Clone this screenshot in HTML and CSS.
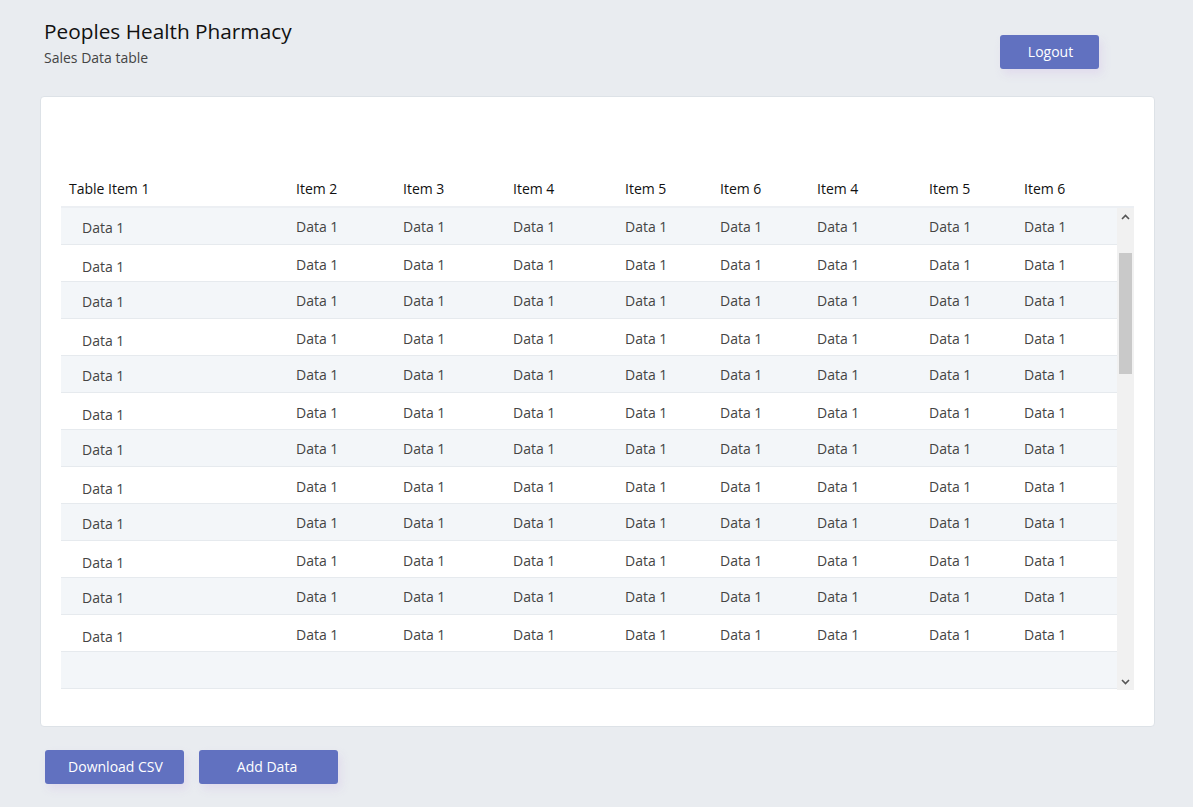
FILE: index.html
```html
<!DOCTYPE html>
<html lang="en">
<head>
<meta charset="utf-8">
<title>Peoples Health Pharmacy</title>
<link rel="stylesheet" href="styles.css">
</head>
<body>
<header class="top">
  <div class="brand">
    <h1 class="title">Peoples Health Pharmacy</h1>
    <p class="subtitle">Sales Data table</p>
  </div>
  <button class="btn btn-logout">Logout</button>
</header>

<main class="card">
  <div class="table">
    <div class="thead">
      <div class="c c1">Table Item 1</div>
      <div class="c c2">Item 2</div>
      <div class="c c3">Item 3</div>
      <div class="c c4">Item 4</div>
      <div class="c c5">Item 5</div>
      <div class="c c6">Item 6</div>
      <div class="c c7">Item 4</div>
      <div class="c c8">Item 5</div>
      <div class="c c9">Item 6</div>
    </div>
    <div class="tbody-wrap">
      <div class="tbody" id="rows"></div>
      <div class="scrollbar">
        <div class="sb-btn">
          <svg width="9" height="6" viewBox="0 0 9 6"><path d="M1 5 L4.5 1.5 L8 5" fill="none" stroke="#555" stroke-width="1.6"/></svg>
        </div>
        <div class="sb-gap"></div>
        <div class="sb-thumb"></div>
        <div class="sb-rest"></div>
        <div class="sb-btn">
          <svg width="9" height="6" viewBox="0 0 9 6"><path d="M1 1 L4.5 4.5 L8 1" fill="none" stroke="#555" stroke-width="1.6"/></svg>
        </div>
      </div>
    </div>
  </div>
</main>

<footer class="actions">
  <button class="btn btn-dl">Download CSV</button>
  <button class="btn btn-add">Add Data</button>
</footer>

<script>
  var rows = document.getElementById('rows');
  var html = '';
  for (var r = 0; r < 13; r++) {
    html += '<div class="tr">';
    for (var c = 1; c <= 9; c++) {
      html += '<div class="c c' + c + '">' + (r < 12 ? 'Data 1' : '') + '</div>';
    }
    html += '</div>';
  }
  rows.innerHTML = html;
</script>
</body>
</html>
```

FILE: styles.css
```css
* { box-sizing: border-box; }

html, body { margin: 0; padding: 0; }

body {
  background: #e9ecf0;
  font-family: "Open Sans", "Noto Sans", sans-serif;
  color: #222;
  width: 1193px;
  height: 807px;
  overflow: hidden;
}

.top {
  display: flex;
  justify-content: space-between;
  align-items: flex-start;
  padding: 16px 94px 0 44px;
  height: 96px;
}

.title {
  margin: 0;
  font-size: 20.8px;
  font-weight: 400;
  color: #111;
  line-height: 30px;
}

.subtitle {
  margin: 3px 0 0 0;
  font-size: 14px;
  color: #444;
  line-height: 18px;
}

.btn {
  font-family: inherit;
  font-size: 14px;
  color: #fff;
  background: #6171c0;
  border: none;
  border-radius: 3px;
  height: 34px;
  cursor: pointer;
  box-shadow: 3px 5px 9px rgba(214, 200, 232, 0.45);
}

.btn-logout {
  width: 99px;
  margin-top: 19px;
  padding-bottom: 2px;
  padding-right: 4px;
}

.card {
  margin: 0 38px 0 40px;
  height: 631px;
  background: #fff;
  border: 1px solid #dde2e7;
  border-radius: 4px;
  padding: 73px 20px 0 20px;
}

.table {
  width: 1073px;
}

.thead {
  display: flex;
  height: 38px;
  align-items: center;
  border-bottom: 2px solid #eceff3;
  font-size: 14px;
  color: #111;
}

.c {
  padding-left: 8px;
  white-space: nowrap;
}
.c1 { width: 227px; }
.c2 { width: 107px; }
.c3 { width: 110px; }
.c4 { width: 112px; }
.c5 { width: 95px; }
.c6 { width: 97px; }
.c7 { width: 112px; }
.c8 { width: 95px; }
.c9 { width: 101px; }

.tbody-wrap {
  display: flex;
  height: 482px;
}

.tbody {
  width: 1056px;
}

.tr {
  display: flex;
  align-items: center;
  height: 37px;
  border-bottom: 1px solid #e6eaee;
  font-size: 14px;
  color: #444;
}
.tr:nth-child(odd) { background: #f3f6f9; }
.tr:nth-child(even) { padding-top: 3px; }
.tr .c1 { padding-left: 21px; padding-top: 3px; }

.scrollbar {
  width: 17px;
  background: #f1f1f1;
  display: flex;
  flex-direction: column;
}
.sb-btn {
  height: 17px;
  display: flex;
  align-items: center;
  justify-content: center;
}
.sb-gap { height: 28px; }
.sb-thumb {
  height: 121px;
  margin: 0 2px;
  background: #c9c9c9;
}
.sb-rest { flex: 1; }

.actions {
  display: flex;
  gap: 15px;
  padding: 23px 0 0 45px;
}
.btn-dl { width: 139px; padding-bottom: 2px; padding-right: 4px; }
.btn-add { width: 139px; padding-bottom: 2px; padding-right: 9px; }
```
